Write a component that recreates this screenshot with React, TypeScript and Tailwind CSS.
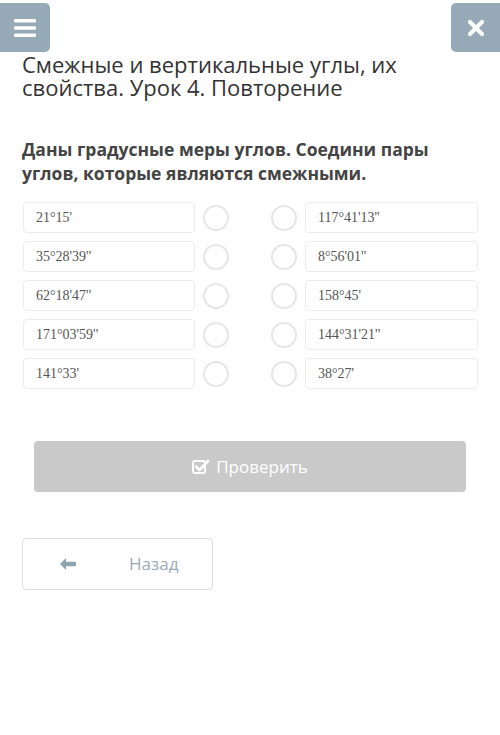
import React from "react";

const left = ["21°15'", "35°28'39''", "62°18'47''", "171°03'59''", "141°33'"];
const right = ["117°41'13''", "8°56'01''", "158°45'", "144°31'21''", "38°27'"];

function Circle() {
  return <div className="w-[26px] h-[26px] rounded-full border-2 border-[#e6e6e6] bg-white shrink-0" />;
}

export default function App() {
  return (
    <div className="w-[500px] h-[735px] bg-white relative overflow-hidden" style={{ fontFamily: '"Open Sans", sans-serif' }}>
      <div className="flex justify-between pt-[3px]">
        <button className="w-[50px] h-[49px] bg-[#95a9b6] rounded-r-[5px] flex items-center justify-center">
          <svg width="22" height="18" viewBox="0 0 22 18">
            <rect x="0" y="0" width="22" height="3.5" rx="1" fill="#fff" />
            <rect x="0" y="7.2" width="22" height="3.5" rx="1" fill="#fff" />
            <rect x="0" y="14.4" width="22" height="3.5" rx="1" fill="#fff" />
          </svg>
        </button>
        <button className="w-[49px] h-[49px] bg-[#95a9b6] rounded-l-[5px] flex items-center justify-center">
          <svg width="18" height="18" viewBox="0 0 18 18">
            <path d="M3 3 L15 15 M15 3 L3 15" stroke="#fff" strokeWidth="4.2" strokeLinecap="round" />
          </svg>
        </button>
      </div>
      <div className="px-[22px]">
        <h1 className="text-[22px] leading-[23px] text-[#333] m-0 mt-[1px]">
          Смежные и вертикальные углы, их свойства. Урок 4. Повторение
        </h1>
        <p className="mt-[38px] w-[440px] text-[17.5px] leading-[24px] font-bold text-[#444]">
          Даны градусные меры углов. Соедини пары углов, которые являются смежными.
        </p>
      </div>
      <div className="mt-[17px] pl-[23px] pr-[22px] flex flex-col gap-[8px]">
        {left.map((l, i) => (
          <div key={i} className="flex items-center h-[31px]">
            <div className="w-[172px] h-[31px] border border-[#ececec] rounded-[4px] flex items-center pl-[12px] text-[14px] text-[#555]" style={{ fontFamily: '"Liberation Serif", serif' }}>
              {l}
            </div>
            <div className="ml-[8px]"><Circle /></div>
            <div className="ml-[42px]"><Circle /></div>
            <div className="ml-[8px] w-[173px] h-[31px] border border-[#ececec] rounded-[4px] flex items-center pl-[12px] text-[14px] text-[#555]" style={{ fontFamily: '"Liberation Serif", serif' }}>
              {right[i]}
            </div>
          </div>
        ))}
      </div>
      <div className="mt-[52px] px-[34px]">
        <button className="w-[432px] h-[51px] bg-[#c9c9c9] rounded-[4px] flex items-center justify-center gap-[6px] text-white text-[17px]">
          <svg width="18" height="16" viewBox="0 0 18 16">
            <rect x="1" y="2" width="12" height="12" rx="2" fill="none" stroke="#fff" strokeWidth="2" />
            <path d="M4 7.5 L7.5 11 L16 2" fill="none" stroke="#fff" strokeWidth="2.6" strokeLinecap="round" strokeLinejoin="round" />
          </svg>
          <span>Проверить</span>
        </button>
      </div>
      <div className="mt-[46px] px-[22px]">
        <button className="w-[191px] h-[52px] border border-[#dcdcdc] rounded-[4px] flex items-center text-[17px] text-[#9aabb6]">
          <svg className="ml-[36px]" width="18" height="14" viewBox="0 0 18 14">
            <path d="M7 1 L1 7 L7 13 Z" fill="#8fa3b1" />
            <rect x="5" y="4.8" width="12" height="4.4" rx="1" fill="#8fa3b1" />
          </svg>
          <span className="ml-[52px]">Назад</span>
        </button>
      </div>
    </div>
  );
}
